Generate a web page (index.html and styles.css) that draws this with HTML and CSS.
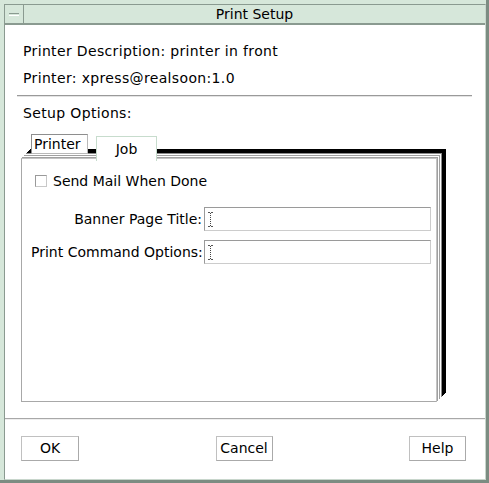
FILE: index.html
```html
<!DOCTYPE html>
<html>
<head>
<meta charset="utf-8">
<title>Print Setup</title>
<link rel="stylesheet" href="styles.css">
</head>
<body>
<div class="frame">
  <div class="inner">
    <div class="titlebar">
      <div class="menu-btn"><span class="dash"></span></div>
      <div class="title">Print Setup</div>
    </div>
    <div class="content">
      <div class="line first">Printer Description: printer in front</div>
      <div class="line second">Printer: xpress@realsoon:1.0</div>
      <div class="sep"></div>
      <div class="line setup">Setup Options:</div>
      <div class="tabs">
        <div class="tab inactive">Printer</div>
        <div class="tab active">Job</div>
      </div>
      <div class="page">
        <label class="check-row"><span class="checkbox"></span>Send Mail When Done</label>
        <div class="form">
          <div class="label">Banner Page Title:</div>
          <div class="input"><svg class="ibeam" width="5" height="15" viewBox="0 0 5 15"><path d="M0 0.5H2M3 0.5H5M0 14.5H2M3 14.5H5" stroke="#555" stroke-width="1"/><path d="M2.5 1V14" stroke="#444" stroke-width="1" stroke-dasharray="1 1"/></svg></div>
          <div class="label">Print Command Options:</div>
          <div class="input"><svg class="ibeam" width="5" height="15" viewBox="0 0 5 15"><path d="M0 0.5H2M3 0.5H5M0 14.5H2M3 14.5H5" stroke="#555" stroke-width="1"/><path d="M2.5 1V14" stroke="#444" stroke-width="1" stroke-dasharray="1 1"/></svg></div>
        </div>
      </div>
      <div class="sep2"></div>
      <div class="buttons">
        <div class="btn ok">OK</div>
        <div class="btn">Cancel</div>
        <div class="btn">Help</div>
      </div>
    </div>
  </div>
</div>
</body>
</html>
```
FILE: styles.css
```css
html, body {
  margin: 0;
  padding: 0;
  background: #d6e7da;
}
body {
  font-family: "DejaVu Sans", sans-serif;
  font-size: 14px;
  color: #000;
}
.frame {
  width: 489px;
  height: 483px;
  box-sizing: border-box;
  padding: 4px 0 0 4px;
  border-right: 3px solid #7c8c82;
  border-bottom: 3px solid #7c8c82;
  background: #d6e7da;
}
.inner {
  height: 100%;
  box-sizing: border-box;
  border-left: 1px solid #8a9a90;
  border-top: 1px solid #8a9a90;
  border-right: 1px solid #c8d6cc;
  border-bottom: 1px solid #c8d6cc;
  display: flex;
  flex-direction: column;
}
.titlebar {
  height: 18px;
  display: flex;
  border-bottom: 2px solid #8a9a90;
  background: #d6e7da;
}
.menu-btn {
  width: 18px;
  border-right: 1px solid #8a9a90;
  display: flex;
  align-items: center;
  justify-content: center;
}
.dash {
  width: 10px;
  height: 1px;
  border-top: 1px solid #8a9a90;
  border-bottom: 1px solid #ffffff;
  background: #d6e7da;
}
.title {
  flex: 1;
  text-align: center;
  line-height: 18px;
}
.content {
  flex: 1;
  background: #fff;
  display: flex;
  flex-direction: column;
}
.line {
  line-height: 20px;
  padding-left: 18px;
  white-space: nowrap;
  letter-spacing: 0.35px;
}
.first { margin-top: 16px; }
.second { margin-top: 7px; }
.sep {
  margin: 7px 13px 0 12px;
  height: 1px;
  background: #9a9a9a;
  border-bottom: 1px solid #e4e4e4;
}
.setup { margin-top: 6px; }
.tabs {
  margin-top: 11px;
  padding-left: 26px;
  display: flex;
  align-items: flex-start;
  gap: 8px;
  position: relative;
  z-index: 1;
  height: 24px;
}
.tab {
  background: #fff;
  box-sizing: border-box;
  white-space: nowrap;
}
.inactive {
  width: 57px;
  height: 20px;
  line-height: 18px;
  border: 1px solid #8e8e8e;
  border-right-color: #b8b8b8;
  border-bottom-color: #b8b8b8;
  padding-left: 2px;
}
.active {
  width: 61px;
  height: 25px;
  margin-top: 2px;
  line-height: 24px;
  text-align: center;
  border: 1px solid #c7dccd;
  border-bottom: none;
}
.page {
  margin: 0 0 0 16px;
  width: 416px;
  height: 244px;
  box-sizing: border-box;
  border: 1px solid #a8a8a8;
  border-top-color: #c4c4c4;
  border-right-color: #c4c4c4;
  background: #fff;
  padding: 15px 0 0 13px;
  box-shadow:
    1px -1px 0 #a0a0a0,
    2px -2px 0 #ffffff,
    3px -3px 0 #a0a0a0,
    4px -4px 0 #ffffff,
    5px -5px 0 #8a8a8a,
    6px -6px 0 #000,
    7px -7px 0 #000,
    8px -8px 0 #000,
    9px -9px 0 #000;
}
.check-row {
  display: flex;
  align-items: center;
  line-height: 14px;
}
.checkbox {
  width: 12px;
  height: 12px;
  box-sizing: border-box;
  border: 1px solid #9a9a9a;
  border-right-color: #c8c8c8;
  border-bottom-color: #c8c8c8;
  margin-right: 6px;
}
.form {
  margin-top: 19px;
  margin-left: -4px;
  display: grid;
  grid-template-columns: 171px 227px;
  column-gap: 2px;
  row-gap: 9px;
  align-items: center;
}
.label {
  text-align: right;
  white-space: nowrap;
}
.input {
  height: 24px;
  box-sizing: border-box;
  border: 1px solid #9a9a9a;
  border-right-color: #cccccc;
  border-bottom-color: #cccccc;
  display: flex;
  align-items: center;
  padding-left: 3px;
}
.ibeam { display: block; }
.sep2 {
  margin-top: 16px;
  height: 1px;
  background: #a8a8a8;
  border-bottom: 1px solid #eeeeee;
}
.buttons {
  margin-top: 16px;
  padding: 0 19px 0 16px;
  display: flex;
  justify-content: space-between;
}
.btn {
  width: 57px;
  height: 25px;
  box-sizing: border-box;
  border: 1px solid #aaaaaa;
  border-top-color: #c0c0c0;
  border-left-color: #c0c0c0;
  text-align: center;
  line-height: 23px;
}
.ok { width: 58px; }
```
